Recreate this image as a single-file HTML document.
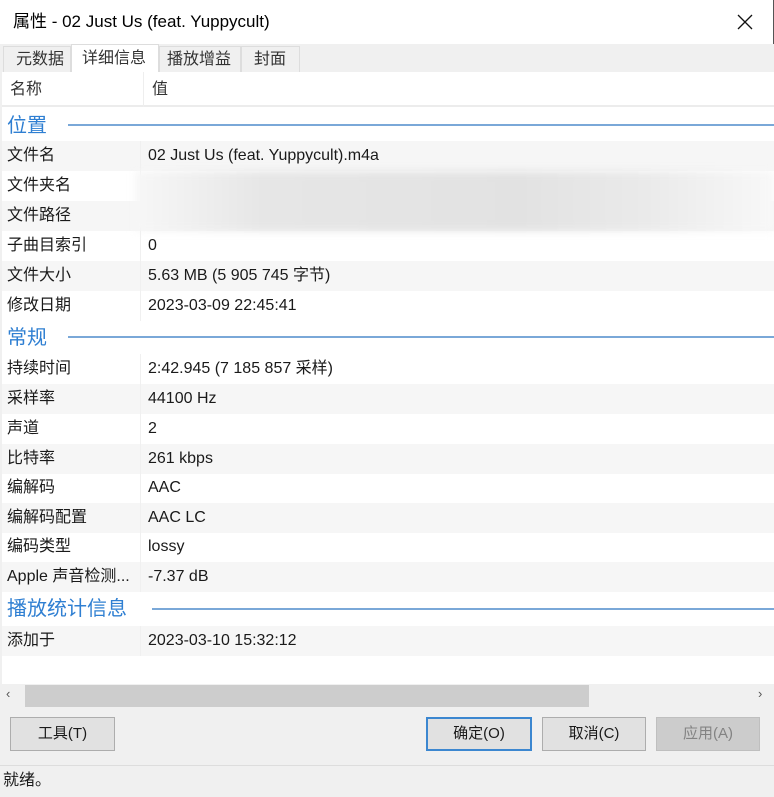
<!DOCTYPE html>
<html><head><meta charset="utf-8"><style>
*{margin:0;padding:0;box-sizing:border-box}
body{width:774px;height:797px;background:#f0f0f0;font-family:"Liberation Sans","Microsoft YaHei","Noto Sans CJK SC",sans-serif;font-size:16px;color:#1a1a1a;position:relative;overflow:hidden}
.abs{position:absolute}
.title{left:0;top:0;width:774px;height:44px;background:#fff;border-right:1px solid #555}
.title span{position:absolute;left:13px;top:0;line-height:44px;font-size:17px;color:#000}
.x{position:absolute;right:18px;top:12px;width:20px;height:20px}
.tab{top:46px;height:26px;font-size:16px;line-height:26px;padding-left:12px;background:#f0f0f0;border:1px solid #ddd;border-bottom:none;color:#333}
.list{left:2px;top:72px;width:772px;height:612px;background:#fff}
.row{position:absolute;left:0;width:772px;height:30px;font-size:16px;line-height:30px}
.row .k{position:absolute;left:5px;top:0;width:134px;height:30px;border-right:1px solid #f0f0f0;white-space:nowrap}
.row .v{position:absolute;left:146px;top:0}
.g{background:#f6f6f6}
.sec{position:absolute;left:5px;font-size:20px;line-height:30px;color:#2f7fd2}
.line{position:absolute;height:2px;background:#7aa8d8;right:0}
.btn{top:717px;height:34px;background:#e1e1e1;border:1px solid #adadad;text-align:center;font-size:15px;line-height:32px}
</style></head><body>
<div class="abs title"><span>属性 - 02 Just Us (feat. Yuppycult)</span>
<svg class="x" viewBox="0 0 20 20"><path d="M3 3L17 17M17 3L3 17" stroke="#111" stroke-width="1.3"/></svg></div>
<div class="abs tab" style="left:3px;width:68px">元数据</div>
<div class="abs tab" style="left:71px;top:44px;height:28px;line-height:28px;width:88px;background:#fff;padding-left:10px">详细信息</div>
<div class="abs tab" style="left:159px;width:82px;padding-left:7px">播放增益</div>
<div class="abs tab" style="left:241px;width:59px">封面</div>
<div class="abs list">
<div class="row" style="top:0;height:35px;line-height:35px;border-bottom:2px solid #ececec"><span class="v" style="left:8px;color:#333">名称</span><span class="v" style="left:150px;color:#333">值</span></div>
<div class="abs" style="top:0;height:35px;left:141px;width:1px;background:#eee"></div>
<div class="sec" style="top:39px">位置</div><div class="line" style="top:52px;left:66px"></div>
<div class="row g" style="top:69px"><span class="k">文件名</span><span class="v">02 Just Us (feat. Yuppycult).m4a</span></div>
<div class="row" style="top:99px"><span class="k">文件夹名</span></div>
<div class="row g" style="top:129px"><span class="k">文件路径</span></div>
<div class="abs" style="left:133px;top:99px;width:639px;height:60px;background:linear-gradient(90deg,#f7f7f7 0%,#e6e6e6 20%,#e2e2e2 60%,#eaeaea 80%,#f8f8f8 100%);filter:blur(4px)"></div>
<div class="row" style="top:159px"><span class="k">子曲目索引</span><span class="v">0</span></div>
<div class="row g" style="top:189px"><span class="k">文件大小</span><span class="v">5.63 MB (5 905 745 字节)</span></div>
<div class="row" style="top:219px"><span class="k">修改日期</span><span class="v">2023-03-09 22:45:41</span></div>
<div class="sec" style="top:251px">常规</div><div class="line" style="top:264px;left:66px"></div>
<div class="row" style="top:282px"><span class="k">持续时间</span><span class="v">2:42.945 (7 185 857 采样)</span></div>
<div class="row g" style="top:312px"><span class="k">采样率</span><span class="v">44100 Hz</span></div>
<div class="row" style="top:342px"><span class="k">声道</span><span class="v">2</span></div>
<div class="row g" style="top:372px"><span class="k">比特率</span><span class="v">261 kbps</span></div>
<div class="row" style="top:401px"><span class="k">编解码</span><span class="v">AAC</span></div>
<div class="row g" style="top:431px"><span class="k">编解码配置</span><span class="v">AAC LC</span></div>
<div class="row" style="top:460px"><span class="k">编码类型</span><span class="v">lossy</span></div>
<div class="row g" style="top:490px"><span class="k">Apple 声音检测...</span><span class="v">-7.37 dB</span></div>
<div class="sec" style="top:522px">播放统计信息</div><div class="line" style="top:536px;left:150px"></div>
<div class="row g" style="top:554px"><span class="k">添加于</span><span class="v">2023-03-10 15:32:12</span></div>
</div>
<div class="abs" style="left:0;top:684px;width:774px;height:24px;background:#f0f0f0"></div>
<div class="abs" style="left:6px;top:686px;font-size:13px;color:#555">‹</div>
<div class="abs" style="left:758px;top:686px;font-size:13px;color:#555">›</div>
<div class="abs" style="left:25px;top:685px;width:564px;height:22px;background:#cdcdcd"></div>
<div class="abs btn" style="left:10px;width:105px">工具(T)</div>
<div class="abs btn" style="left:426px;width:106px;border:2px solid #3c87d0;line-height:30px">确定(O)</div>
<div class="abs btn" style="left:542px;width:104px">取消(C)</div>
<div class="abs btn" style="left:656px;width:104px;background:#ccc;border-color:#bfbfbf;color:#838383">应用(A)</div>
<div class="abs" style="left:0;top:765px;width:774px;height:1px;background:#ddd"></div>
<div class="abs" style="left:3px;top:767px;line-height:28px;font-size:16px">就绪。</div>
</body></html>
